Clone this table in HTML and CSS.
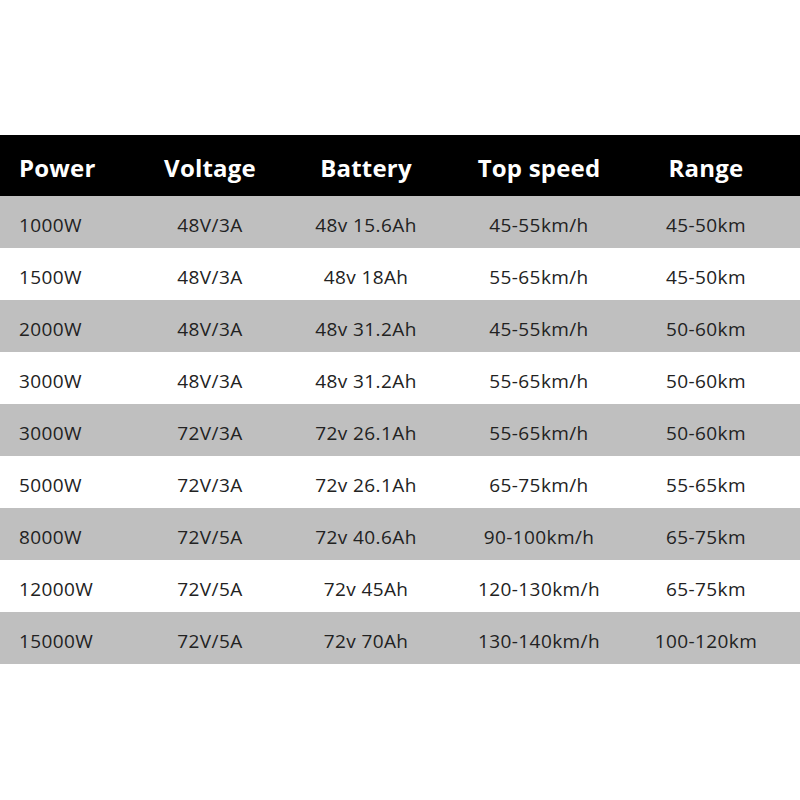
FILE: index.html
```html
<!DOCTYPE html>
<html>
<head>
<meta charset="utf-8">
<link rel="stylesheet" href="styles.css">
</head>
<body>
<div class="page">
  <div class="table">
    <div class="row head">
      <div class="cell first">Power</div>
      <div class="cell">Voltage</div>
      <div class="cell">Battery</div>
      <div class="cell">Top speed</div>
      <div class="cell">Range</div>
    </div>
    <div class="row gray">
      <div class="cell first">1000W</div><div class="cell">48V/3A</div><div class="cell">48v 15.6Ah</div><div class="cell">45-55km/h</div><div class="cell">45-50km</div>
    </div>
    <div class="row">
      <div class="cell first">1500W</div><div class="cell">48V/3A</div><div class="cell">48v 18Ah</div><div class="cell">55-65km/h</div><div class="cell">45-50km</div>
    </div>
    <div class="row gray">
      <div class="cell first">2000W</div><div class="cell">48V/3A</div><div class="cell">48v 31.2Ah</div><div class="cell">45-55km/h</div><div class="cell">50-60km</div>
    </div>
    <div class="row">
      <div class="cell first">3000W</div><div class="cell">48V/3A</div><div class="cell">48v 31.2Ah</div><div class="cell">55-65km/h</div><div class="cell">50-60km</div>
    </div>
    <div class="row gray">
      <div class="cell first">3000W</div><div class="cell">72V/3A</div><div class="cell">72v 26.1Ah</div><div class="cell">55-65km/h</div><div class="cell">50-60km</div>
    </div>
    <div class="row">
      <div class="cell first">5000W</div><div class="cell">72V/3A</div><div class="cell">72v 26.1Ah</div><div class="cell">65-75km/h</div><div class="cell">55-65km</div>
    </div>
    <div class="row gray">
      <div class="cell first">8000W</div><div class="cell">72V/5A</div><div class="cell">72v 40.6Ah</div><div class="cell">90-100km/h</div><div class="cell">65-75km</div>
    </div>
    <div class="row">
      <div class="cell first">12000W</div><div class="cell">72V/5A</div><div class="cell">72v 45Ah</div><div class="cell">120-130km/h</div><div class="cell">65-75km</div>
    </div>
    <div class="row gray">
      <div class="cell first">15000W</div><div class="cell">72V/5A</div><div class="cell">72v 70Ah</div><div class="cell">130-140km/h</div><div class="cell">100-120km</div>
    </div>
  </div>
</div>
</body>
</html>
```

FILE: styles.css
```css
html, body {
  margin: 0;
  padding: 0;
  background: #ffffff;
}
.page {
  width: 800px;
  height: 800px;
  padding-top: 135px;
  box-sizing: border-box;
  font-family: "Open Sans", "Noto Sans", sans-serif;
}
.table {
  display: flex;
  flex-direction: column;
}
.row {
  display: grid;
  grid-template-columns: 135px 150px 162px 184px 150px;
  height: 52px;
  padding-top: 5px;
  box-sizing: border-box;
  align-items: center;
  font-size: 19px;
  letter-spacing: 0.4px;
  color: #222222;
  background: #ffffff;
}
.row.gray {
  background: #bfbfbf;
}
.row.head {
  height: 61px;
  padding-top: 3px;
  background: #000000;
  color: #ffffff;
  font-size: 24px;
  font-weight: 700;
  letter-spacing: 0.2px;
}
.cell {
  text-align: center;
  white-space: nowrap;
}
.cell.first {
  text-align: left;
  padding-left: 19px;
}
```
